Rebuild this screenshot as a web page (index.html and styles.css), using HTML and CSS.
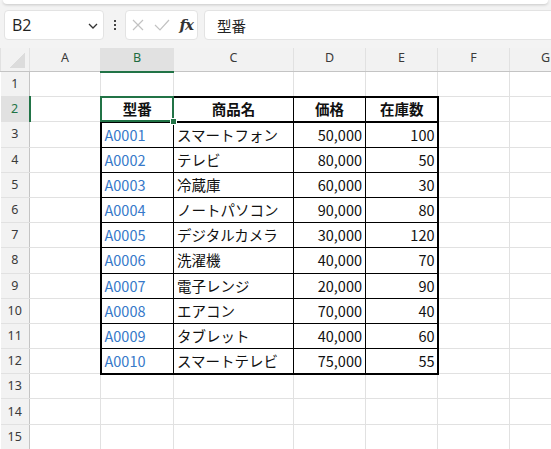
FILE: index.html
```html
<!DOCTYPE html>
<html lang="ja">
<head>
    <meta charset="UTF-8">
    <meta name="viewport" content="width=device-width, initial-scale=1.0">
    <title>型番一覧</title>
    <link rel="stylesheet" href="styles.css">
</head>
<body>
    <!-- Formula bar -->
    <div class="top">
        <div class="ribbon"></div>
        <div class="formula-bar">
            <div class="name-box">
                <span>B2</span>
                <svg class="chevron" width="10" height="6" viewBox="0 0 10 6"><path d="M1 1l4 4 4-4" fill="none" stroke="#333" stroke-width="1.3"/></svg>
            </div>
            <div class="dots"><i></i><i></i><i></i></div>
            <div class="fx-box">
                <svg width="12" height="12" viewBox="0 0 12 12"><path d="M1 1l10 10M11 1L1 11" fill="none" stroke="#c2c2c2" stroke-width="1.2"/></svg>
                <svg width="16" height="12" viewBox="0 0 16 12"><path d="M1 6l5 5L15 1" fill="none" stroke="#c2c2c2" stroke-width="1.2"/></svg>
                <span class="fx">fx</span>
            </div>
            <div class="formula-input">型番</div>
        </div>
    </div>

    <!-- Sheet -->
    <div class="sheet-wrap">
        <table class="sheet">
            <colgroup>
                <col class="col-rowhead"><col class="col-a"><col class="col-b"><col class="col-c">
                <col class="col-n"><col class="col-n"><col class="col-n"><col class="col-n">
            </colgroup>
            <thead>
                <tr>
                    <th class="corner"></th>
                    <th>A</th><th class="cur-col">B</th><th>C</th><th>D</th><th>E</th><th>F</th><th>G</th>
                </tr>
            </thead>
            <tbody>
                <tr><th>1</th><td></td><td></td><td></td><td></td><td></td><td></td><td></td></tr>
                <tr class="head-row">
                    <th class="cur-row">2</th><td></td>
                    <td class="d key active"><span class="sel-box"><i class="handle"></i></span>型番</td>
                    <td class="d">商品名</td><td class="d">価格</td><td class="d last">在庫数</td>
                    <td></td><td></td>
                </tr>
                <tr><th>3</th><td></td><td class="d key code">A0001</td><td class="d">スマートフォン</td><td class="d num">50,000</td><td class="d num last">100</td><td></td><td></td></tr>
                <tr><th>4</th><td></td><td class="d key code">A0002</td><td class="d">テレビ</td><td class="d num">80,000</td><td class="d num last">50</td><td></td><td></td></tr>
                <tr><th>5</th><td></td><td class="d key code">A0003</td><td class="d">冷蔵庫</td><td class="d num">60,000</td><td class="d num last">30</td><td></td><td></td></tr>
                <tr><th>6</th><td></td><td class="d key code">A0004</td><td class="d">ノートパソコン</td><td class="d num">90,000</td><td class="d num last">80</td><td></td><td></td></tr>
                <tr><th>7</th><td></td><td class="d key code">A0005</td><td class="d">デジタルカメラ</td><td class="d num">30,000</td><td class="d num last">120</td><td></td><td></td></tr>
                <tr><th>8</th><td></td><td class="d key code">A0006</td><td class="d">洗濯機</td><td class="d num">40,000</td><td class="d num last">70</td><td></td><td></td></tr>
                <tr><th>9</th><td></td><td class="d key code">A0007</td><td class="d">電子レンジ</td><td class="d num">20,000</td><td class="d num last">90</td><td></td><td></td></tr>
                <tr><th>10</th><td></td><td class="d key code">A0008</td><td class="d">エアコン</td><td class="d num">70,000</td><td class="d num last">40</td><td></td><td></td></tr>
                <tr><th>11</th><td></td><td class="d key code">A0009</td><td class="d">タブレット</td><td class="d num">40,000</td><td class="d num last">60</td><td></td><td></td></tr>
                <tr class="end-row"><th>12</th><td></td><td class="d key code">A0010</td><td class="d">スマートテレビ</td><td class="d num">75,000</td><td class="d num last">55</td><td></td><td></td></tr>
                <tr><th>13</th><td></td><td></td><td></td><td></td><td></td><td></td><td></td></tr>
                <tr><th>14</th><td></td><td></td><td></td><td></td><td></td><td></td><td></td></tr>
                <tr><th>15</th><td></td><td></td><td></td><td></td><td></td><td></td><td></td></tr>
            </tbody>
        </table>
    </div>
</body>
</html>
```

FILE: styles.css
```css
body {
    margin: 0;
    background: #f3f3f3;
    font-family: "Noto Sans CJK JP", sans-serif;
    overflow: hidden;
}

/* Formula bar */
.top {
    height: 48px;
}

.ribbon {
    height: 4px;
    margin: 0 3px;
    background: #fff;
    border-radius: 0 0 6px 6px;
    box-shadow: 0 1px 3px rgba(0, 0, 0, 0.18);
}

.formula-bar {
    display: flex;
    align-items: center;
    height: 30px;
    margin-top: 6px;
}

.name-box,
.fx-box,
.formula-input {
    height: 30px;
    box-sizing: border-box;
    background: #fff;
    border: 1px solid #e3e3e3;
    border-radius: 4px;
    display: flex;
    align-items: center;
}

.name-box {
    width: 100px;
    margin-left: 4px;
    padding: 0 5px 0 7px;
    justify-content: space-between;
    font-family: "Open Sans", sans-serif;
    font-size: 16px;
    color: #222;
}

.chevron {
    margin-top: 1px;
}

.dots {
    width: 21px;
    display: flex;
    flex-direction: column;
    align-items: center;
    gap: 2px;
}

.dots i {
    width: 2px;
    height: 2px;
    background: #444;
}

.fx-box {
    width: 73px;
    padding: 0 4px 0 6px;
    justify-content: space-between;
}

.fx {
    font-family: "DejaVu Serif", serif;
    font-style: italic;
    font-weight: bold;
    font-size: 15px;
    color: #333;
    letter-spacing: -1px;
}

.formula-input {
    flex: 1;
    margin-left: 6px;
    margin-right: -10px;
    padding-left: 12px;
    font-size: 14.5px;
    color: #222;
}

/* Sheet */
.sheet-wrap {
    overflow: hidden;
}

.sheet {
    border-collapse: collapse;
    table-layout: fixed;
    width: 581px;
    background: #fff;
    font-size: 14.5px;
    color: #111;
}

.col-rowhead { width: 29px; }
.col-a { width: 71px; }
.col-b { width: 73px; }
.col-c { width: 120px; }
.col-n { width: 72px; }

.sheet th,
.sheet td {
    border: 1px solid #e1e1e1;
    padding: 0 3px;
    line-height: 18px;
    white-space: nowrap;
    overflow: visible;
}

.sheet th {
    background: #f2f2f2;
    font-family: "Noto Sans", sans-serif;
    font-size: 12.5px;
    font-weight: normal;
    color: #3a3a3a;
    text-align: center;
    padding: 0;
}

.sheet thead tr {
    height: 23.5px;
}

.sheet thead th {
    border-bottom-color: #c4c4c4;
    border-top: none;
    padding-bottom: 3px;
}

.sheet tbody tr {
    height: 25.2px;
}

.sheet tbody th {
    border-right-color: #c4c4c4;
    border-left: none;
}

.sheet th.corner {
    background: #f2f2f2 linear-gradient(135deg, transparent 50%, #dcdcdc 50%) no-repeat right 4px bottom 3px / 16px 16px;
}

.sheet th.cur-col {
    background: #e1e1e1;
    color: #1d6b3f;
    border-bottom: 2px solid #217346;
}

.sheet th.cur-row {
    background: #e1e1e1;
    color: #217346;
    border-right: 2px solid #217346;
}

/* Data table */
.sheet td.d {
    border: 1px solid #000;
}

.sheet td.key {
    border-left: 2px solid #000;
}

.sheet td.last {
    border-right: 2px solid #000;
    padding-right: 2px;
}

.head-row td.d {
    border-top: 2px solid #000;
    border-bottom: 2px solid #000;
    font-weight: 700;
    text-align: center;
}

.end-row td.d {
    border-bottom: 2px solid #000;
}

.code {
    color: #3779c9;
}

.num {
    text-align: right;
}

/* Active cell */
.sheet td.active {
    position: relative;
}

.sel-box {
    position: absolute;
    z-index: 2;
    top: -2px;
    left: -2px;
    right: -1px;
    bottom: -1px;
    border: 2px solid #217346;
}

.handle {
    position: absolute;
    right: -5px;
    bottom: -5px;
    width: 5px;
    height: 5px;
    background: #217346;
    border: 1px solid #fff;
}
```
